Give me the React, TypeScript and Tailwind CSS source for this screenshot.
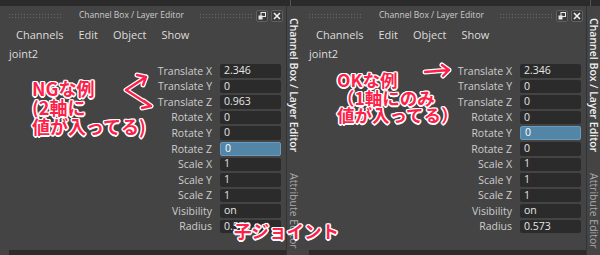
const font = { fontFamily: '"Open Sans", "Noto Sans", sans-serif' };
const jpFont = { fontFamily: '"Noto Sans CJK JP", "Noto Sans", sans-serif' };

type Row = { label: string; value: string; active?: boolean };

const leftRows: Row[] = [
  { label: "Translate X", value: "2.346" },
  { label: "Translate Y", value: "0" },
  { label: "Translate Z", value: "0.963" },
  { label: "Rotate X", value: "0" },
  { label: "Rotate Y", value: "0" },
  { label: "Rotate Z", value: "0", active: true },
  { label: "Scale X", value: "1" },
  { label: "Scale Y", value: "1" },
  { label: "Scale Z", value: "1" },
  { label: "Visibility", value: "on" },
  { label: "Radius", value: "0.573" },
];

const rightRows: Row[] = leftRows.map((row) => {
  if (row.label === "Translate Z") return { ...row, value: "0" };
  if (row.label === "Rotate Y") return { ...row, active: true };
  if (row.label === "Rotate Z") return { ...row, active: false };
  return row;
});

const outline =
  "[text-shadow:1.5px_0_0_#fff,-1.5px_0_0_#fff,0_1.5px_0_#fff,0_-1.5px_0_#fff,1px_1px_0_#fff,-1px_-1px_0_#fff,1px_-1px_0_#fff,-1px_1px_0_#fff]";

function Grip() {
  return (
    <div className="flex h-[4px] w-[54px] flex-col justify-between">
      <div className="h-px w-full bg-[repeating-linear-gradient(90deg,#6a6a6a_0_1px,transparent_1px_3px)]" />
      <div className="h-px w-full bg-[repeating-linear-gradient(90deg,#6a6a6a_0_1px,transparent_1px_3px)]" />
    </div>
  );
}

function TitleButton({ kind }: { kind: "float" | "close" }) {
  return (
    <div className="flex h-[12px] w-[12px] items-center justify-center rounded-[2px] border border-[#606060] bg-[#3c3c3c]">
      {kind === "float" ? (
        <svg width="8" height="8" viewBox="0 0 8 8">
          <rect x="3" y="0.5" width="4.5" height="4" fill="none" stroke="#e8e8e8" strokeWidth="1" />
          <rect x="0.5" y="3.5" width="4" height="4" fill="#e8e8e8" />
        </svg>
      ) : (
        <svg width="8" height="8" viewBox="0 0 8 8">
          <path d="M1 1L7 7M7 1L1 7" stroke="#f0f0f0" strokeWidth="1.6" />
        </svg>
      )}
    </div>
  );
}

function Panel({ rows, children }: { rows: Row[]; children?: React.ReactNode }) {
  return (
    <div className="relative flex h-[255px] w-[300px] flex-col bg-[#444444]" style={font}>
      <div className="flex h-[6px] bg-[#2b2b2b]">
        <div className="w-[290px]" />
        <div className="w-px bg-[#555]" />
      </div>
      <div className="flex flex-1">
        <div className="flex w-[286px] flex-col">
          <div className="flex h-[19px] items-center pl-[9px] pr-[3px]">
            <Grip />
            <div className="flex-1 text-center text-[8.5px] text-[#cccccc]">Channel Box / Layer Editor</div>
            <Grip />
            <div className="ml-[2px] flex gap-[3px]">
              <TitleButton kind="float" />
              <TitleButton kind="close" />
            </div>
          </div>
          <div className="flex h-[20px] items-center gap-[15px] pl-[16px] text-[11px] text-[#dcdcdc]">
            <span>Channels</span>
            <span>Edit</span>
            <span>Object</span>
            <span>Show</span>
          </div>
          <div className="flex h-[18px] items-center pl-[9px] text-[11px] text-[#dcdcdc]">joint2</div>
          <div className="flex flex-col">
            {rows.map((row) => (
              <div key={row.label} className="flex h-[15.6px] items-center">
                <div className="w-[213px] pr-[1px] text-right text-[10.5px] font-medium leading-none text-[#cdcdcd]">
                  {row.label}
                </div>
                <div
                  className={
                    row.active
                      ? "ml-[7px] flex h-[13.5px] w-[61px] items-center rounded-[2px] border border-[#6a9cc0] bg-[#5285a6] pl-[4px] text-[10.5px] text-white"
                      : "ml-[7px] flex h-[13.5px] w-[61px] items-center rounded-[2px] bg-[#2b2b2b] pl-[4px] text-[10.5px] text-[#e6e6e6]"
                  }
                >
                  {row.value}
                </div>
              </div>
            ))}
          </div>
          <div className="flex-1" />
          <div className="ml-[9px] h-[5px] bg-[#2b2b2b]" />
        </div>
        <div className="flex w-[14px] flex-col border-l border-[#333] bg-[#444444]">
          <div className="mt-[12px] whitespace-nowrap text-[10.5px] font-semibold leading-[13px] text-[#f0f0f0] [writing-mode:vertical-rl]">
            Channel Box / Layer Editor
          </div>
          <div className="mt-[21px] whitespace-nowrap text-[10.5px] leading-[13px] text-[#a8a8a8] [writing-mode:vertical-rl]">
            Attribute Editor
          </div>
        </div>
      </div>
      {children}
    </div>
  );
}

function Note({ className, lines }: { className: string; lines: string[] }) {
  return (
    <div className={`absolute font-bold text-[#ff1f4b] ${outline} ${className}`} style={jpFont}>
      {lines.map((line) => (
        <div key={line}>{line}</div>
      ))}
    </div>
  );
}

export default function App() {
  return (
    <div className="relative flex h-[255px] w-[600px] overflow-hidden bg-[#444444]">
      <Panel rows={leftRows}>
        <Note className="left-[32px] top-[79px] text-[18px] leading-[19px]" lines={["NGな例", "(2軸に", "値が入ってる)"]} />
        <svg className="absolute left-[118px] top-[70px]" width="42" height="44" viewBox="0 0 42 44">
          <g fill="none" strokeLinecap="round" strokeLinejoin="round">
            <path d="M28 7L8 20L33 36M19 5L28 7L25 15M26 31L33 36L24 38" stroke="#fff" strokeWidth="5" />
            <path d="M28 7L8 20L33 36M19 5L28 7L25 15M26 31L33 36L24 38" stroke="#ff1f4b" strokeWidth="2.4" />
          </g>
        </svg>
      </Panel>
      <Panel rows={rightRows}>
        <Note
          className="left-[37px] top-[71px] text-[17.5px] leading-[17.5px]"
          lines={["OKな例", "（1軸にのみ", "値が入ってる）"]}
        />
        <svg className="absolute left-[122px] top-[62px]" width="32" height="18" viewBox="0 0 32 18">
          <g fill="none" strokeLinecap="round" strokeLinejoin="round">
            <path d="M3 10L27 8M20 3L27 8L21 14" stroke="#fff" strokeWidth="5" />
            <path d="M3 10L27 8M20 3L27 8L21 14" stroke="#ff1f4b" strokeWidth="2.4" />
          </g>
        </svg>
      </Panel>
      <div
        className={`absolute left-[234px] top-[219px] text-[17.5px] font-bold leading-[24px] text-[#ff1f4b] ${outline}`}
        style={jpFont}
      >
        子ジョイント
      </div>
    </div>
  );
}
